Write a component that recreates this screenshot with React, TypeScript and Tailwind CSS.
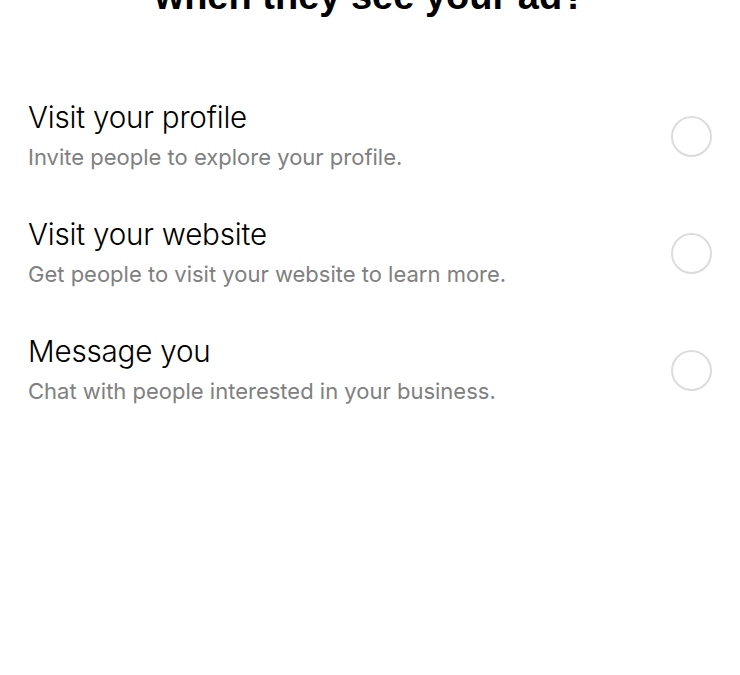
import React from "react";

const items = [
  { title: "Visit your profile", sub: "Invite people to explore your profile." },
  { title: "Visit your website", sub: "Get people to visit your website to learn more." },
  { title: "Message you", sub: "Chat with people interested in your business." },
];

export default function App() {
  return (
    <div className="w-[740px] h-[675px] bg-white overflow-hidden" style={{ fontFamily: "Inter, 'Noto Sans', sans-serif" }}>
      <h1
        className="-mt-[26px] text-center text-[38px] leading-[44px] font-bold text-black"
        style={{ fontFamily: "'Liberation Sans', Arial, sans-serif" }}
      >
        when they see your ad?
      </h1>
      <div className="mt-[58px] flex flex-col">
        {items.map((it) => (
          <div key={it.title} className="flex items-center justify-between pl-[28px] pr-[28px] h-[117px]">
            <div className="flex flex-col">
              <div className="text-[29.6px] leading-[36px] font-light text-black tracking-[-0.2px]">{it.title}</div>
              <div className="mt-[8px] text-[22px] leading-[28px] text-[#808080]">{it.sub}</div>
            </div>
            <div className="mt-[4px] w-[41px] h-[41px] rounded-full border-2 border-[#dcdcdc]" />
          </div>
        ))}
      </div>
    </div>
  );
}
